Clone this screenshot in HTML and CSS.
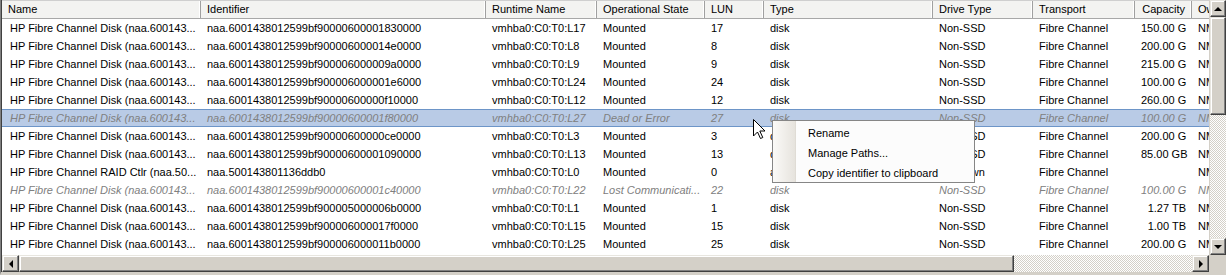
FILE: index.html
```html
<!DOCTYPE html>
<html lang="en">
<head>
  <meta charset="UTF-8" />
  <title>Storage Devices</title>
  <link rel="stylesheet" href="styles.css">
</head>
<body>
  <div class="window">
    <div class="view">
      <div class="row head">
        <div class="c">Name</div>
        <div class="c">Identifier</div>
        <div class="c">Runtime Name</div>
        <div class="c">Operational State</div>
        <div class="c">LUN</div>
        <div class="c">Type</div>
        <div class="c">Drive Type</div>
        <div class="c">Transport</div>
        <div class="c num">Capacity</div>
        <div class="c">Owner</div>
      </div>
      <div id="rows"></div>
    </div>

    <div class="vscroll">
      <div class="btn"><span class="arr up"></span></div>
      <div class="thumb vthumb"></div>
      <div class="track"></div>
      <div class="btn"><span class="arr down"></span></div>
    </div>

    <div class="hscroll">
      <div class="btn"><span class="arr left"></span></div>
      <div class="thumb hthumb"></div>
      <div class="track"></div>
      <div class="btn"><span class="arr right"></span></div>
    </div>
    <div class="corner"></div>

    <div class="menu">
      <div class="item">Rename</div>
      <div class="item">Manage Paths...</div>
      <div class="item">Copy identifier to clipboard</div>
    </div>

    <svg class="cursor" width="13" height="21" viewBox="0 0 13 21">
      <path d="M0.5 0.5 L0.5 17 L4.5 13 L7.5 19.5 L9.8 18.5 L6.8 12 L12 12 Z" fill="#fff" stroke="#000" stroke-width="1"/>
    </svg>
  </div>

  <script>
    const pre = "naa.6001438012599bf9";
    const disks = [
      ["HP Fibre Channel Disk (naa.600143...", pre + "0000600001830000", "L17", "Mounted", "17", "disk", "Non-SSD", "150.00 G"],
      ["HP Fibre Channel Disk (naa.600143...", pre + "00006000014e0000", "L8", "Mounted", "8", "disk", "Non-SSD", "200.00 G"],
      ["HP Fibre Channel Disk (naa.600143...", pre + "00006000009a0000", "L9", "Mounted", "9", "disk", "Non-SSD", "215.00 G"],
      ["HP Fibre Channel Disk (naa.600143...", pre + "00006000001e6000", "L24", "Mounted", "24", "disk", "Non-SSD", "100.00 G"],
      ["HP Fibre Channel Disk (naa.600143...", pre + "0000600000f10000", "L12", "Mounted", "12", "disk", "Non-SSD", "260.00 G"],
      ["HP Fibre Channel Disk (naa.600143...", pre + "0000600001f80000", "L27", "Dead or Error", "27", "disk", "Non-SSD", "100.00 G", "dead sel"],
      ["HP Fibre Channel Disk (naa.600143...", pre + "0000600000ce0000", "L3", "Mounted", "3", "disk", "Non-SSD", "200.00 G"],
      ["HP Fibre Channel Disk (naa.600143...", pre + "0000600001090000", "L13", "Mounted", "13", "disk", "Non-SSD", "85.00 GB"],
      ["HP Fibre Channel RAID Ctlr (naa.50...", "naa.500143801136ddb0", "L0", "Mounted", "0", "array", "Unknown", ""],
      ["HP Fibre Channel Disk (naa.600143...", pre + "0000600001c40000", "L22", "Lost Communicati...", "22", "disk", "Non-SSD", "100.00 G", "dead"],
      ["HP Fibre Channel Disk (naa.600143...", pre + "00005000006b0000", "L1", "Mounted", "1", "disk", "Non-SSD", "1.27 TB"],
      ["HP Fibre Channel Disk (naa.600143...", pre + "00006000017f0000", "L15", "Mounted", "15", "disk", "Non-SSD", "1.00 TB"],
      ["HP Fibre Channel Disk (naa.600143...", pre + "00006000011b0000", "L25", "Mounted", "25", "disk", "Non-SSD", "200.00 G"]
    ];

    const box = document.getElementById("rows");
    disks.forEach(d => {
      const row = document.createElement("div");
      row.className = "row " + (d[8] || "");
      const cells = [d[0], d[1], "vmhba0:C0:T0:" + d[2], d[3], d[4], d[5], d[6], "Fibre Channel", d[7], "NMP"];
      cells.forEach((txt, i) => {
        const c = document.createElement("div");
        c.className = i === 8 ? "c num" : "c";
        c.textContent = txt;
        row.appendChild(c);
      });
      box.appendChild(row);
    });
  </script>
</body>
</html>
```

FILE: styles.css
```css
body {
  margin: 0;
  background: #fff;
  font-family: Tahoma, "Liberation Sans", Arial, sans-serif;
  font-size: 11px;
  color: #000;
}

.window {
  position: relative;
  width: 1226px;
  height: 275px;
  box-sizing: border-box;
  border-left: 1px solid #808080;
  border-bottom: 3px solid #d4d0c8;
  box-shadow: inset 1px 0 #404040;
  display: grid;
  grid-template-columns: 1207px 17px;
  grid-template-rows: 255px 17px;
  padding-left: 1px;
  overflow: hidden;
}

.view {
  overflow: hidden;
  background: #fff;
}

.row {
  display: grid;
  grid-template-columns: 199px 285px 111px 108px 59px 169px 100px 102px 57px 60px;
  height: 18px;
  line-height: 18px;
  box-sizing: border-box;
}

.c {
  padding: 0 6px;
  white-space: nowrap;
  overflow: hidden;
}

.row > .c:first-child {
  padding-left: 8px;
}

.num {
  text-align: right;
}

.head {
  height: 19px;
  line-height: 17px;
  background: #f3f3f1;
  border-top: 1px solid #cfcfcf;
  border-bottom: 1px solid #a8a8a8;
}

.head .c {
  border-right: 1px solid #a0a0a0;
  box-shadow: inset -1px 0 #fff;
}

.head > .c:first-child {
  padding-left: 6px;
}

.dead {
  color: #808080;
  font-style: italic;
}

.sel {
  background: #b9cbe6;
  border-top: 1px solid #6d95c8;
  border-bottom: 1px solid #6d95c8;
  line-height: 16px;
}

/* scrollbars */
.vscroll, .hscroll {
  display: flex;
  background: #d4d0c8;
}

.vscroll {
  flex-direction: column;
  border-left: 1px solid #d4d0c8;
}

.btn, .thumb {
  box-sizing: border-box;
  flex: none;
  background: #d4d0c8;
  border: 1px solid;
  border-color: #e8e6e0 #404040 #404040 #e8e6e0;
  box-shadow: inset -1px -1px #808080, inset 1px 1px #fff;
  display: flex;
  align-items: center;
  justify-content: center;
}

.vscroll .btn {
  height: 17px;
}

.hscroll .btn {
  width: 17px;
}

.vthumb {
  height: 98px;
}

.hthumb {
  width: 995px;
}

.track {
  flex: 1;
  background: repeating-conic-gradient(#d4d0c8 0 25%, #fff 0 50%) 0 0 / 2px 2px;
}

.corner {
  background: #d4d0c8;
}

.arr {
  width: 0;
  height: 0;
  border: 4px solid transparent;
}

.arr.up { border-bottom-color: #000; margin-top: -4px; }
.arr.down { border-top-color: #000; margin-top: 4px; }
.arr.left { border-right-color: #000; margin-left: -4px; }
.arr.right { border-left-color: #000; margin-left: 4px; }

/* context menu */
.menu {
  position: absolute;
  left: 771px;
  top: 120px;
  width: 203px;
  height: 63px;
  box-sizing: border-box;
  border: 1px solid #868686;
  padding-top: 2px;
  background: linear-gradient(to right, #fbfaf8 0, #e6e3dd 22px, #d9d5cd 23px, #fcfcfc 23px);
}

.item {
  height: 20px;
  line-height: 20px;
  padding-left: 35px;
}

.cursor {
  position: absolute;
  left: 752px;
  top: 119px;
}
```
